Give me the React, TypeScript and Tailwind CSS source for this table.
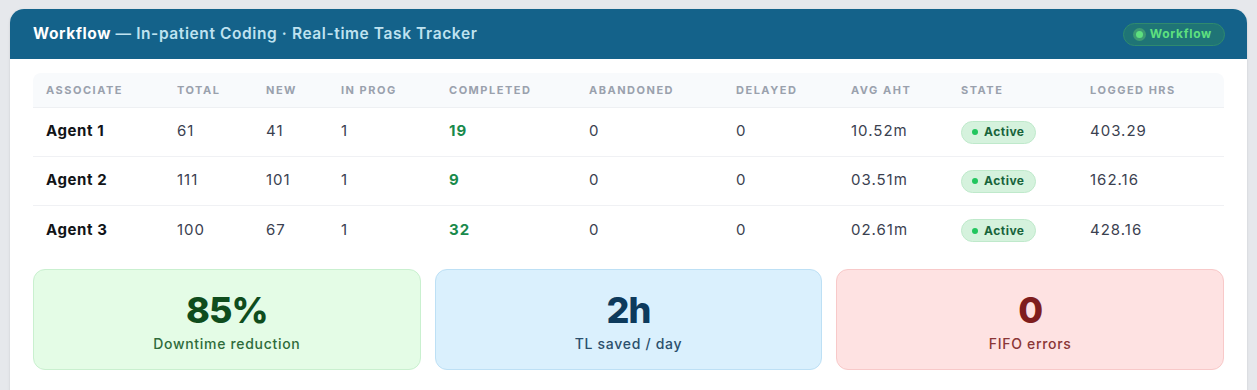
const rows = [
  { name: "Agent 1", total: 61, fresh: 41, prog: 1, done: 19, aband: 0, delayed: 0, aht: "10.52m", hrs: "403.29" },
  { name: "Agent 2", total: 111, fresh: 101, prog: 1, done: 9, aband: 0, delayed: 0, aht: "03.51m", hrs: "162.16" },
  { name: "Agent 3", total: 100, fresh: 67, prog: 1, done: 32, aband: 0, delayed: 0, aht: "02.61m", hrs: "428.16" },
];

const cols = [
  { label: "Associate", w: "w-[131px]" },
  { label: "Total", w: "w-[89px]" },
  { label: "New", w: "w-[75px]" },
  { label: "In Prog", w: "w-[108px]" },
  { label: "Completed", w: "w-[140px]" },
  { label: "Abandoned", w: "w-[147px]" },
  { label: "Delayed", w: "w-[115px]" },
  { label: "Avg AHT", w: "w-[110px]" },
  { label: "State", w: "w-[129px]" },
  { label: "Logged Hrs", w: "" },
];

const StatCard = ({ value, label, box, num, text }: { value: string; label: string; box: string; num: string; text: string }) => (
  <div className={`flex-1 h-[101px] rounded-xl border flex flex-col items-center justify-center ${box}`}>
    <div className={`mt-[6px] text-[36px] leading-none font-extrabold tracking-tight ${num}`}>{value}</div>
    <div className={`mt-[6px] text-[14px] leading-[20px] font-medium tracking-[0.7px] ${text}`}>{label}</div>
  </div>
);

const App = () => {
  return (
    <div className="min-h-[390px] bg-[#e6e8ec] px-[10px] pt-[9px] font-['Inter','Noto_Sans',sans-serif]">
      <div className="bg-white rounded-t-[14px] overflow-hidden shadow-sm">
        <div className="h-[50px] bg-[#14628a] flex items-center justify-between pl-[23px] pr-[22px]">
          <h1 className="text-[15.5px] font-semibold text-[#bfe2f0] tracking-[0.6px]">
            <span className="text-white font-bold">Workflow</span> — In-patient Coding · Real-time Task Tracker
          </h1>
          <span className="flex items-center gap-[7px] h-[23px] px-[12px] rounded-full border border-[#2f8a6e] bg-[#1f7476] text-[#5ee07f] text-[12px] font-bold tracking-[0.7px]">
            <span className="w-[7px] h-[7px] rounded-full bg-[#5ee07f] ring-[3px] ring-[#3d9a72]" />
            Workflow
          </span>
        </div>
        <div className="px-[23px] pt-[14px] pb-[30px]">
          <table className="w-full border-collapse">
            <thead>
              <tr className="bg-[#f8fafc] h-[34px] border-b border-[#eef0f3]">
                {cols.map((c, i) => (
                  <th
                    key={c.label}
                    className={`${c.w} ${i === 0 ? "rounded-tl-lg" : ""} ${i === cols.length - 1 ? "rounded-tr-lg" : ""} pl-[13px] text-left text-[11px] font-bold uppercase tracking-[1.5px] text-[#9aa1ad]`}
                  >
                    {c.label}
                  </th>
                ))}
              </tr>
            </thead>
            <tbody>
              {rows.map((r, i) => (
                <tr key={r.name} className={`h-[49px] ${i < rows.length - 1 ? "border-b border-[#f0f1f4]" : ""} text-[15px] text-[#3b4150] tracking-[1px]`}>
                  <td className="pl-[13px] font-bold text-[#111418] text-[15px] tracking-[0.6px]">{r.name}</td>
                  <td className="pl-[13px]">{r.total}</td>
                  <td className="pl-[13px]">{r.fresh}</td>
                  <td className="pl-[13px]">{r.prog}</td>
                  <td className="pl-[13px] font-bold text-[#198a4c]">{r.done}</td>
                  <td className="pl-[13px]">{r.aband}</td>
                  <td className="pl-[13px]">{r.delayed}</td>
                  <td className="pl-[13px]">{r.aht}</td>
                  <td className="pl-[13px]">
                    <span className="inline-flex items-center gap-[6px] h-[23px] px-[10px] rounded-full bg-[#d5f2dd] border border-[#bfe9cb] text-[#17633a] text-[12px] font-bold tracking-[0.5px]">
                      <span className="w-[6px] h-[6px] rounded-full bg-[#22c55e]" />
                      Active
                    </span>
                  </td>
                  <td className="pl-[13px]">{r.hrs}</td>
                </tr>
              ))}
            </tbody>
          </table>
          <div className="mt-[15px] flex gap-[14px]">
            <StatCard value="85%" label="Downtime reduction" box="bg-[#e4fce6] border-[#c9f0cf]" num="text-[#0f4d1d]" text="text-[#2f6b3a]" />
            <StatCard value="2h" label="TL saved / day" box="bg-[#daf0fd] border-[#bde0f5]" num="text-[#0d3a5c]" text="text-[#2b4f6c]" />
            <StatCard value="0" label="FIFO errors" box="bg-[#fee2e2] border-[#f8c9c9]" num="text-[#7f1d1d]" text="text-[#8b3636]" />
          </div>
        </div>
      </div>
    </div>
  );
};

export default App;
